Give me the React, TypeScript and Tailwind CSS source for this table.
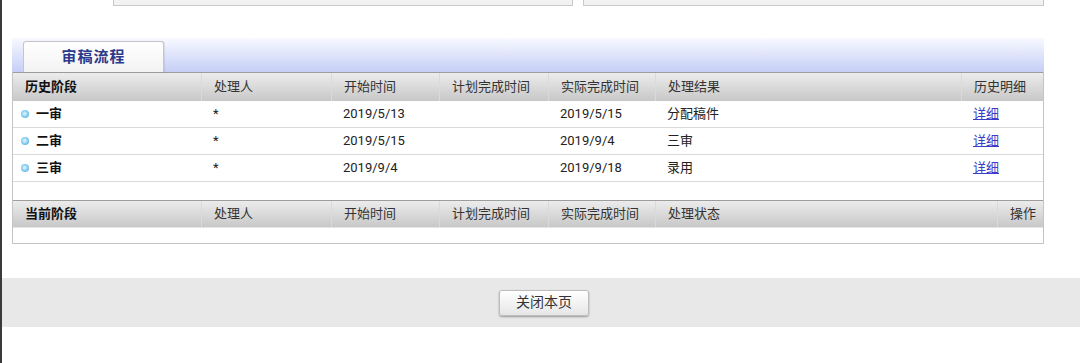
import React from "react"

type HistoryRow = {
  stage: string
  handler: string
  start: string
  planned: string
  actual: string
  result: string
}

const history: HistoryRow[] = [
  { stage: "一审", handler: "*", start: "2019/5/13", planned: "", actual: "2019/5/15", result: "分配稿件" },
  { stage: "二审", handler: "*", start: "2019/5/15", planned: "", actual: "2019/9/4", result: "三审" },
  { stage: "三审", handler: "*", start: "2019/9/4", planned: "", actual: "2019/9/18", result: "录用" },
]

const historyCols = "grid grid-cols-[188px_130px_108px_109px_107px_306px_1fr]"
const currentCols = "grid grid-cols-[188px_130px_108px_109px_107px_342px_1fr]"

const headCell = "flex items-center pl-[12px] border-l border-[#dadada] first:border-l-0"
const headBar =
  "border-t border-[#9d9d9d] bg-gradient-to-b from-[#ececec] to-[#c8c8c8] text-[#333]"

const Dot = () => (
  <span className="mr-[7px] inline-block h-[8px] w-[8px] rounded-full bg-[radial-gradient(circle_at_45%_45%,#d6f1ff_10%,#7cc8ee_55%,#3fa6dc)]" />
)

export default function App() {
  return (
    <div className="h-[363px] overflow-hidden border-l-2 border-[#3a3a3a] bg-white font-['Roboto','Noto_Sans_CJK_SC',sans-serif] text-[13px] text-[#222]">
      {/* form boxes cut off at the top */}
      <div className="flex gap-[10px] pl-[111px]">
        <div className="h-[6px] w-[460px] border-x border-b border-[#c9c9c9] bg-[#f2f2f2]" />
        <div className="h-[6px] w-[461px] border-x border-b border-[#c9c9c9] bg-[#f2f2f2]" />
      </div>

      <div className="ml-[10px] mt-[32px] w-[1032px]">
        {/* tab strip */}
        <div className="flex h-[34px] items-end bg-gradient-to-b from-[#f8f9ff] to-[#c5cff6] pl-[11px]">
          <div className="flex h-[31px] w-[141px] items-center justify-center rounded-t-[3px] border-x border-t border-[#c6c6c6] bg-gradient-to-b from-white to-[#f3f3f3] text-[15px] font-bold tracking-[1px] text-[#2b3a8c] shadow-[1px_0_1px_rgba(0,0,0,0.08)]">
            审稿流程
          </div>
        </div>

        <div className="border-x border-b border-[#c4c4c4]">
          {/* history header */}
          <div className={`${historyCols} ${headBar} h-[29px]`}>
            <div className={`${headCell} font-bold text-[#111]`}>历史阶段</div>
            <div className={headCell}>处理人</div>
            <div className={headCell}>开始时间</div>
            <div className={headCell}>计划完成时间</div>
            <div className={headCell}>实际完成时间</div>
            <div className={headCell}>处理结果</div>
            <div className={headCell}>历史明细</div>
          </div>

          {history.map((row) => (
            <div key={row.stage} className={`${historyCols} h-[27px] items-center border-b border-[#d9d9d9]`}>
              <div className="flex items-center pl-[8px] font-bold text-[#111]">
                <Dot />
                {row.stage}
              </div>
              <div className="pl-[12px]">{row.handler}</div>
              <div className="pl-[12px]">{row.start}</div>
              <div className="pl-[12px]">{row.planned}</div>
              <div className="pl-[12px]">{row.actual}</div>
              <div className="pl-[12px]">{row.result}</div>
              <div className="pl-[12px]">
                <a href="#" className="text-[#3c3cc8] underline">
                  详细
                </a>
              </div>
            </div>
          ))}
          <div className="h-[18px]" />

          {/* current stage header */}
          <div className={`${currentCols} ${headBar} h-[27px]`}>
            <div className={`${headCell} font-bold text-[#111]`}>当前阶段</div>
            <div className={headCell}>处理人</div>
            <div className={headCell}>开始时间</div>
            <div className={headCell}>计划完成时间</div>
            <div className={headCell}>实际完成时间</div>
            <div className={headCell}>处理状态</div>
            <div className={headCell}>操作</div>
          </div>
          <div className="h-[16px] border-t border-[#e4e4e4]" />
        </div>
      </div>

      {/* bottom action bar */}
      <div className="mt-[34px] flex h-[49px] items-center justify-center bg-[#e8e8e8] pl-[6px]">
        <button className="h-[26px] w-[90px] rounded-[3px] border border-[#bdbdbd] bg-gradient-to-b from-white to-[#e6e6e6] text-[14px] text-[#333] shadow-[0_1px_2px_rgba(0,0,0,0.35)]">
          关闭本页
        </button>
      </div>
    </div>
  )
}
